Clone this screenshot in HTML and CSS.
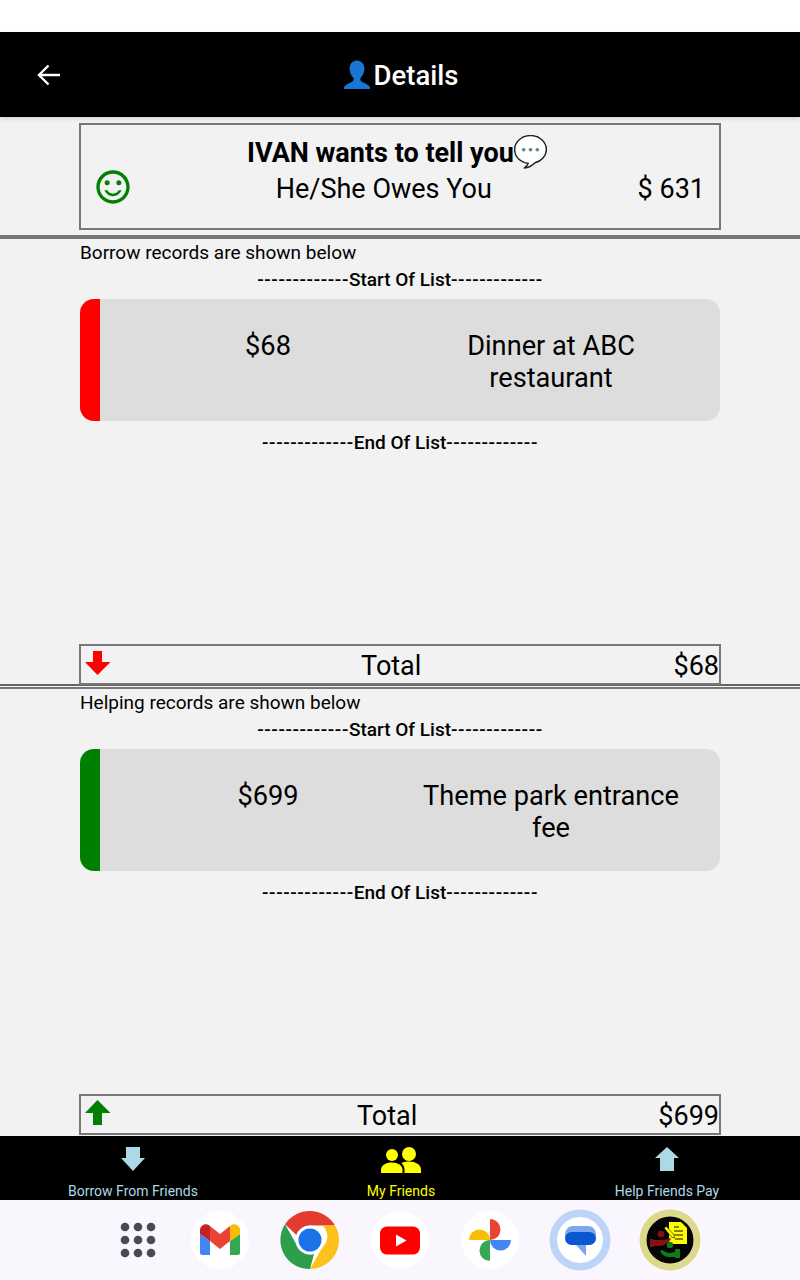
FILE: index.html
```html
<!DOCTYPE html>
<html lang="en">
<head>
<meta charset="utf-8">
<title>Details</title>
<link rel="stylesheet" href="styles.css">
</head>
<body>
<div class="status"></div>
<header class="appbar">
  <svg class="back" width="24" height="22" viewBox="0 0 24 22"><path d="M23 11H2.500M11.500 1.500 2 11l9.500 9.500" fill="none" stroke="#fff" stroke-width="2.400"/></svg>
  <div class="title">
    <svg class="person" width="30" height="30" viewBox="0 0 30 30"><path d="M15 0.5c-4.600 0-7.400 3.600-7.400 8.200 0 3.800 1.700 7.300 4 9.300 .5 1.900-.4 3.300-2.300 4.300-3 1.500-6.800 2.900-7.300 5.200-.2 .9 0 1.600 0 1.600h26s.2-.7 0-1.600c-.5-2.300-4.300-3.700-7.300-5.200-1.900-1-2.800-2.400-2.300-4.300 2.300-2 4-5.500 4-9.300 0-4.600-2.800-8.200-7.400-8.200z" fill="#1976d2"/></svg>
    <span>Details</span>
  </div>
</header>
<main class="content">
  <section class="summary-wrap">
    <div class="summary">
      <div class="summary-head">
        <span>IVAN wants to tell you</span>
        <svg class="bubble" width="33" height="34" viewBox="2.500 2 29 30"><path d="M17 2.500C9 2.500 3 8 3 15c0 6.500 5.500 11.500 12 12-.5 1.500-1.800 3-3.500 4.200 3.600-.3 7-2.200 9.500-4.700C26.500 25 31 20.500 31 15 31 8 25 2.500 17 2.500z" fill="#fff" stroke="#222" stroke-width="1.300" stroke-linejoin="round"/><circle cx="11" cy="15" r="1.600" fill="#66818f"/><circle cx="17" cy="15" r="1.600" fill="#66818f"/><circle cx="23" cy="15" r="1.600" fill="#66818f"/></svg>
      </div>
      <div class="summary-row">
        <svg class="smile" width="40" height="40" viewBox="0 0 24 24"><path d="M11.990 2C6.470 2 2 6.480 2 12s4.470 10 9.990 10C17.520 22 22 17.520 22 12S17.520 2 11.990 2zM12 20c-4.420 0-8-3.580-8-8s3.580-8 8-8 8 3.580 8 8-3.580 8-8 8z" fill="green"/><circle cx="15.500" cy="9.500" r="1.500" fill="green"/><circle cx="8.500" cy="9.500" r="1.500" fill="green"/><path d="M12 17.500c2.330 0 4.310-1.460 5.110-3.500h-1.670c-.7 1.190-1.970 2-3.440 2s-2.750-.81-3.440-2H6.890c.8 2.040 2.780 3.500 5.110 3.500z" fill="green"/></svg>
        <span class="summary-text">He/She Owes You</span>
        <span class="summary-amount">$ 631</span>
      </div>
    </div>
  </section>
  <hr class="rule">
  <section class="records">
    <p class="records-label">Borrow records are shown below</p>
    <p class="marker"><span class="dashes">-------------</span>Start Of List<span class="dashes">-------------</span></p>
    <div class="card card-red">
      <div class="card-amount">$68</div>
      <div class="card-desc">Dinner at ABC restaurant</div>
    </div>
    <p class="marker marker-end"><span class="dashes">-------------</span>End Of List<span class="dashes">-------------</span></p>
    <div class="total">
      <svg class="total-arrow" width="26" height="26" viewBox="0 0 26 26"><path d="M8 1h9v11h8.500L12.500 25 0 12h8z" fill="red"/></svg>
      <span class="total-label">Total</span>
      <span class="total-amount">$68</span>
    </div>
  </section>
  <hr class="rule rule-thin">
  <section class="records">
    <p class="records-label">Helping records are shown below</p>
    <p class="marker"><span class="dashes">-------------</span>Start Of List<span class="dashes">-------------</span></p>
    <div class="card card-green">
      <div class="card-amount">$699</div>
      <div class="card-desc">Theme park entrance fee</div>
    </div>
    <p class="marker marker-end"><span class="dashes">-------------</span>End Of List<span class="dashes">-------------</span></p>
    <div class="total">
      <svg class="total-arrow" width="26" height="26" viewBox="0 0 26 26"><path d="M8 25h9V13h8.500L12.500 0 0 13h8z" fill="green"/></svg>
      <span class="total-label total-label-wide">Total</span>
      <span class="total-amount">$699</span>
    </div>
  </section>
</main>
<nav class="tabs">
  <div class="tab">
    <svg width="24" height="30" viewBox="0 0 24 24"><path d="M5 0h14v11h5L12 24 0 11h5z" fill="#add8e6"/></svg>
    <span>Borrow From Friends</span>
  </div>
  <div class="tab tab-active">
    <svg width="42" height="30" viewBox="0 0 42 30"><circle cx="12" cy="11" r="6" fill="#ff0"/><circle cx="29" cy="10" r="7" fill="#ff0"/><path d="M1 29v-3c0-5 5-7.500 11-7.500 3 0 5.500 .8 7.500 2 2 1.500 3 3 3 5.500v3z" fill="#ff0"/><path d="M24.500 29v-3c0-3-1-5-3-7 2-1 4.500-1.500 7.500-1.500 6.500 0 12 3 12 8v3.500z" fill="#ff0"/></svg>
    <span>My Friends</span>
  </div>
  <div class="tab">
    <svg width="24" height="30" viewBox="0 0 24 24"><path d="M5 24h14V11h5L12 0 0 11h5z" fill="#add8e6"/></svg>
    <span>Help Friends Pay</span>
  </div>
</nav>
<footer class="dock">
  <svg class="apps" width="36" height="36" viewBox="0 0 36 36" fill="#4a4a55"><circle cx="5" cy="5" r="4.300"/><circle cx="18" cy="5" r="4.300"/><circle cx="31" cy="5" r="4.300"/><circle cx="5" cy="18" r="4.300"/><circle cx="18" cy="18" r="4.300"/><circle cx="31" cy="18" r="4.300"/><circle cx="5" cy="31" r="4.300"/><circle cx="18" cy="31" r="4.300"/><circle cx="31" cy="31" r="4.300"/></svg>
  <div class="app">
    <svg width="60" height="60" viewBox="0 0 60 60"><circle cx="30" cy="30" r="29" fill="#fff"/><path d="M10 24v19c0 1 1 2 2 2h8V31z" fill="#4285f4"/><path d="M40 31v14h8c1 0 2-1 2-2V24z" fill="#34a853"/><path d="M20 31 10 24v-4c0-4.500 5.500-7.500 9-4.800l1 .8z" fill="#c5221f"/><path d="M40 16l1-.8c3.500-2.700 9 .3 9 4.800v4l-10 7z" fill="#fbbc04"/><path d="M20 16 30 24 40 16v15l-10 8-10-8z" fill="#ea4335"/></svg>
  </div>
  <div class="app">
    <svg width="60" height="60" viewBox="0 0 60 60"><circle cx="30" cy="30" r="29" fill="#fff"/><path d="M30 1a29 29 0 0 1 25.100 14.500H30a14.500 14.500 0 0 0-13.600 9.500L5 14.300A29 29 0 0 1 30 1z" fill="#e33b2e"/><path d="M55.100 15.500A29 29 0 0 1 30 59l12.500-21.800A14.500 14.500 0 0 0 42.500 15.500z" fill="#fcc11a"/><path d="M5 14.300l12.500 22A14.500 14.500 0 0 0 34 44l-4 15A29 29 0 0 1 5 14.300z" fill="#2d9f4c"/><circle cx="30" cy="30" r="14.500" fill="#fff"/><circle cx="30" cy="30" r="11.500" fill="#1a73e8"/></svg>
  </div>
  <div class="app">
    <svg width="60" height="60" viewBox="0 0 60 60"><circle cx="30" cy="30" r="29" fill="#fff"/><rect x="10" y="16.500" width="40" height="28" rx="7" fill="#f00"/><path d="M26 24.500v12l10.500-6z" fill="#fff"/></svg>
  </div>
  <div class="app">
    <svg width="60" height="60" viewBox="0 0 60 60"><circle cx="30" cy="30" r="29" fill="#fff"/><path d="M9 30a10.500 10.500 0 0 1 21 0z" fill="#fbbc04"/><path d="M30 9a10.500 10.500 0 0 1 0 21z" fill="#ea4335"/><path d="M30 30h21a10.500 10.500 0 0 1-21 0z" fill="#4285f4"/><path d="M30 30v21a10.500 10.500 0 0 1 0-21z" fill="#34a853"/></svg>
  </div>
  <div class="app app-big">
    <svg width="62" height="62" viewBox="0 0 62 62"><circle cx="31" cy="31" r="30.500" fill="#bcd4f8"/><circle cx="31" cy="31" r="23" fill="#fff"/><path d="M24 17h15c5 0 8 3.500 8 9s-3 10-8 10h-2v11l-10-11c-6 0-11-5-11-10s3-9 8-9z" fill="#7ea6ee"/><rect x="16" y="23" width="31" height="13" rx="6.500" fill="#0b57d0"/></svg>
  </div>
  <div class="app app-big">
    <svg width="62" height="62" viewBox="0 0 62 62"><circle cx="31" cy="31" r="30.500" fill="#dcd98c"/><circle cx="31" cy="31" r="23.500" fill="#050505"/><path d="M30 13h12l6 6v16H30z" fill="#ff0"/><path d="M35 18h5M35 22h9M35 26h9M36 30h8" stroke="#111" stroke-width="1"/><path d="M25 19l2.500-1.500L35 26l.5 3-3-1z" fill="#ff0" stroke="#111" stroke-width=".6"/><circle cx="22" cy="25" r="3.300" fill="#8b0f0f"/><path d="M11 30h3v1h6c2 0 5 1 11-2l1 1c-3 4-7 7-12 7h-6v1h-3z" fill="#8b0f0f"/><circle cx="31" cy="36" r="3.200" fill="#0d7a1c"/><path d="M21 42l2-1c2 1 5 3 8 3l5-1v-3h5v9h-5v-1h-6c-4 0-7-2-9-6z" fill="#0d7a1c"/></svg>
  </div>
</footer>
</body>
</html>
```
FILE: styles.css
```css
* { box-sizing: border-box; }
html, body { margin: 0; padding: 0; }
body {
  width: 800px;
  height: 1280px;
  overflow: hidden;
  display: flex;
  flex-direction: column;
  background: #f2f2f2;
  font-family: Roboto, "Liberation Sans", sans-serif;
  color: #000;
}
.status { height: 32px; background: #fff; flex: none; }
.appbar {
  height: 85px;
  flex: none;
  background: #000;
  display: flex;
  align-items: center;
  justify-content: center;
  position: relative;
  box-shadow: 0 2px 4px rgba(0,0,0,.12);
  z-index: 1;
}
.back { position: absolute; left: 37px; top: 32px; }
.title { display: flex; align-items: center; color: #fff; font-size: 27.500px; font-weight: 500; margin-top: 2px; }
.person { margin-right: 2px; margin-top: -2px; }
.content { height: 1019px; flex: none; overflow: hidden; }
.summary-wrap { height: 118px; padding: 6px 79px 0; }
.summary { height: 107px; border: 2px solid #777; }
.summary-head {
  height: 46px;
  display: flex;
  align-items: center;
  justify-content: center;
  font-size: 27px;
  font-weight: 700;
  padding-top: 9px;
  margin-left: -6px;
}
.bubble { margin-top: -1px; }
.summary-row { display: flex; align-items: center; height: 40px; padding-left: 12px; padding-right: 14px; font-size: 27px; }
.smile { flex: none; margin-top: -8px; }
.summary-text { flex: 1; text-align: center; margin-left: -3px; margin-top: -4px; }
.summary-amount { margin-top: -4px; flex: none; white-space: nowrap; }
.rule { margin: 0; border: 0; height: 4px; background: #777; }
.rule-thin { height: 5px; margin-top: -1px; background: transparent; border-top: 2px solid #666; border-bottom: 2px solid #777; }
.records { height: 446px; padding: 0 80px; display: flex; flex-direction: column; }
.records-label { margin: 0; height: 26px; font-size: 19px; line-height: 26px; padding-top: 1px; }
.marker { margin: 0; height: 28px; line-height: 30px; text-align: center; font-size: 19px; font-weight: 500; white-space: nowrap; }
.dashes { letter-spacing: .6px; }
.marker-end { margin-top: 7px; }
.card {
  height: 122px;
  margin-top: 6px;
  background: #ddd;
  border-radius: 14px;
  border-left: 20px solid;
  display: flex;
  font-size: 27.200px;
  line-height: 32px;
  text-align: center;
}
.card-red { border-left-color: #f00; }
.card-green { border-left-color: #008000; }
.card-amount { width: 310px; padding: 31px 0 0 26px; }
.card-desc { flex: 1; padding: 31px 28px 0 0; }
.total {
  margin: auto -1px 0;
  height: 41px;
  border: 2px solid #777;
  display: flex;
  align-items: center;
  font-size: 27px;
  padding-top: 2px;
  position: relative;
}
.total-arrow { position: absolute; left: 4px; top: 4px; }
.total-label { flex: 1; text-align: center; padding-left: 28px; }
.total-label-wide { padding-left: 35px; }
.total-amount { flex: none; }
.tabs {
  height: 64px;
  flex: none;
  background: #000;
  display: flex;
  color: #add8e6;
  font-size: 14px;
}
.tab { flex: 1; display: flex; flex-direction: column; align-items: center; padding-top: 8px; height: 64px; }
.tab svg { flex: none; }
.tab span { margin-top: 9px; line-height: 17px; }
.tab-active { color: #ff0; padding-left: 2px; }
.dock {
  height: 80px;
  flex: none;
  background: #f9f6fd;
  display: flex;
  align-items: center;
  justify-content: center;
  padding: 0 0 1px 0;
  gap: 30px;
}
.apps { margin-right: 4px; margin-left: 20px; }
.app { width: 60px; height: 60px; display: flex; align-items: center; justify-content: center; }
.app-big svg { flex: none; }
```
